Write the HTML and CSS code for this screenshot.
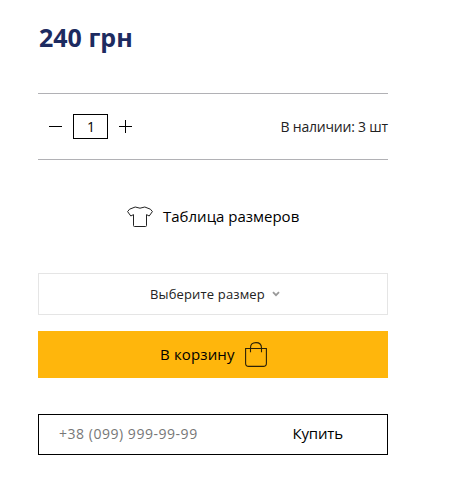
FILE: index.html
```
<!DOCTYPE html>
<html lang="ru">
<head>
  <meta charset="UTF-8">
  <meta name="viewport" content="width=device-width, initial-scale=1.0">
  <title>Товар</title>
  <link rel="stylesheet" href="styles.css">
</head>
<body>
  <div class="product">
    <div class="product-price">240 грн</div>

    <div class="product-stock">
      <div class="quantity">
        <button class="quantity-btn" type="button" aria-label="Меньше">
          <svg width="13" height="13" viewBox="0 0 13 13"><path d="M0 6.5h13" stroke="#000"/></svg>
        </button>
        <input class="quantity-input" type="text" value="1">
        <button class="quantity-btn" type="button" aria-label="Больше">
          <svg width="13" height="13" viewBox="0 0 13 13"><path d="M0 6.5h13M6.5 0v13" stroke="#000"/></svg>
        </button>
      </div>
      <span class="available">В наличии: 3 шт</span>
    </div>

    <a class="size-table">
      <svg width="26" height="22" viewBox="0 0 26 22" fill="none" stroke="#222" stroke-linejoin="round">
        <path d="M8.2 1 2.6 3.2.6 5.6l3.2 4.4 2.7-1.4v11q0 .9.9.9h11.2q.9 0 .9-.9v-11l2.7 1.4 3.2-4.4-2-2.4L17.8 1Q13 3.4 8.2 1z"/>
      </svg>
      <span class="size-table-text">Таблица размеров</span>
    </a>

    <button class="size-select" type="button">
      <span class="size-select-text">Выберите размер</span>
      <svg class="size-select-arrow" width="8" height="6" viewBox="0 0 8 6"><path d="M1 1.2l3 3 3-3" fill="none" stroke="#999" stroke-width="1.8"/></svg>
    </button>

    <button class="cart-btn" type="button">
      <span class="cart-btn-text">В корзину</span>
      <svg width="22" height="25" viewBox="0 0 22 25" fill="none" stroke="#2b2108" stroke-width="1.1">
        <path d="M.6 6.5h20.8v14.7q0 3.2-3.2 3.2H3.8q-3.2 0-3.2-3.2z"/>
        <path d="M5.5 10.2V6Q5.5.6 11 .6T16.5 6v4.2"/>
      </svg>
    </button>

    <form class="quick-buy">
      <input class="quick-buy-phone" type="text" placeholder="+38 (099) 999-99-99">
      <button class="quick-buy-btn" type="button">Купить</button>
    </form>
  </div>
</body>
</html>
```
FILE: styles.css
```
* {
  box-sizing: border-box;
}

body {
  margin: 0;
  background-color: #fff;
  color: #000;
  font-family: "Open Sans", "Noto Sans", sans-serif;
}

button,
input {
  margin: 0;
  padding: 0;
  border: none;
  border-radius: 0;
  background: none;
  color: inherit;
  font-family: inherit;
}

svg {
  display: block;
  flex-shrink: 0;
}

.product {
  width: 388px;
  padding: 20px 0 0 38px;
}

.product-price {
  height: 73px;
  padding-left: 1px;
  color: #1d2b60;
  font-size: 25px;
  font-weight: 700;
  line-height: 34px;
}

.product-stock {
  display: flex;
  justify-content: space-between;
  align-items: center;
  height: 67px;
  border-top: 1px solid #b1b1b5;
  border-bottom: 1px solid #b1b1b5;
}

.quantity {
  display: flex;
  align-items: center;
  gap: 11px;
  padding-left: 11px;
}

.quantity-btn {
  height: 13px;
}

.quantity-input {
  width: 35px;
  height: 25px;
  padding-left: 1px;
  border: 1px solid #000;
  font-size: 14px;
  text-align: center;
}

.available {
  color: #222;
  font-size: 14px;
  letter-spacing: -0.2px;
  white-space: nowrap;
}

.size-table {
  display: flex;
  align-items: center;
  gap: 10px;
  height: 113px;
  padding-left: 89px;
}

.size-table-text {
  padding-bottom: 2px;
  font-size: 15px;
  white-space: nowrap;
}

.size-select {
  display: flex;
  align-items: center;
  gap: 7px;
  width: 100%;
  height: 42px;
  padding-left: 111px;
  border: 1px solid #e5e5e5;
}

.size-select-text {
  color: #222;
  font-size: 13px;
  letter-spacing: 0.15px;
  white-space: nowrap;
}

.size-select-arrow {
  margin-bottom: 1px;
}

.cart-btn {
  display: flex;
  align-items: center;
  gap: 10px;
  width: 100%;
  height: 47px;
  margin-top: 16px;
  padding-left: 122px;
  background-color: #ffb60c;
}

.cart-btn-text {
  padding-bottom: 2px;
  font-size: 15px;
  letter-spacing: 0.15px;
  white-space: nowrap;
}

.quick-buy {
  display: flex;
  height: 41px;
  margin-top: 36px;
  border: 1px solid #000;
}

.quick-buy-phone {
  width: 210px;
  padding: 0 0 2px 20px;
  font-size: 14px;
  letter-spacing: 0.53px;
}

.quick-buy-phone::placeholder {
  color: #777;
}

.quick-buy-btn {
  width: 139px;
  padding-bottom: 3px;
  font-size: 15px;
  letter-spacing: -0.2px;
}
```
